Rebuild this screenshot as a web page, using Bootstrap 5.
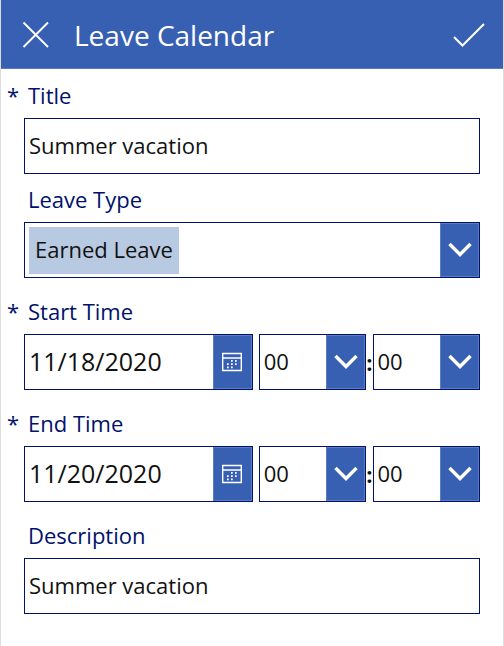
<!DOCTYPE html>
<html lang="en">
<head>
<meta charset="utf-8">
<meta name="viewport" content="width=device-width, initial-scale=1">
<title>Leave Calendar</title>
<link href="https://cdn.jsdelivr.net/npm/bootstrap@5.3.0/dist/css/bootstrap.min.css" rel="stylesheet">
<style>
  :root { --brand: #3860b2; --ink: #00126b; --text-weight: 400; }
  body { font-family: "Open Sans", "Noto Sans", sans-serif; font-size: 22px; color: #111; background: #fff; }
  .app-frame { border: solid #dcdcdc; border-width: 0 1px; min-height: 100vh; }
  .app-bar { background: var(--brand); height: 69px; padding: 2px 17px 0 19px; color: #fff; border-bottom: 1px solid #5b7cc2; }
  .app-bar h1 { font-size: 28px; font-weight: 400; line-height: 40px; }
  .icon-btn { border: 0; background: none; color: inherit; padding: 0; line-height: 1; }
  .icon-btn svg, .side-btn svg { display: block; }
  .leave-form { padding: 5px 23px 31px 23px; }
  .field-label { color: var(--ink); font-weight: var(--text-weight); line-height: 42px; padding: 0 0 2px 4px; position: relative; display: block; }
  .required::before { content: "*"; position: absolute; left: -17px; }
  .field-box { border: 1px solid var(--ink); height: 56px; background: #fff; min-width: 0; }
  .field-box input, .field-box select { border: 0; background: transparent; color: #111; font-weight: var(--text-weight); padding: 0 4px 1px; min-width: 0; width: 100%; flex: 1 1 0; appearance: none; border-radius: 0; }
  .field-box .date-input { font-size: 25px; padding-bottom: 0; }
  .field-box .chip-select { flex: 0 0 150px; background: #b8c9e2; height: 47px; margin-left: 4px; padding: 0 6px 1px; }
  .side-btn { flex: 0 0 39px; border: 1px solid #5b7cc2; background: var(--brand); color: #fff; padding: 0; display: flex; align-items: center; justify-content: center; }
  .date-part { flex: 230 1 0; margin-right: 6px; }
  .time-part { flex: 107 1 0; }
  .colon { flex: 0 0 6px; font-weight: 700; display: flex; justify-content: center; }
</style>
</head>
<body>
<svg class="d-none" aria-hidden="true">
  <symbol id="chevron" viewBox="0 0 24 16"><path d="M1.500 2 12 12.500 22.500 2" fill="none" stroke="currentColor" stroke-width="3.400"/></symbol>
  <symbol id="calendar" viewBox="0 0 20 20">
    <path d="M.7 1.500h18.600v17H.7zM1 6h18" fill="none" stroke="currentColor" stroke-width="1.400"/>
    <path d="M9 8h1.700v1.700H9zM13 8h1.700v1.700H13zM5 11.300h1.700V13H5zM9 11.300h1.700V13H9zM13 11.300h1.700V13H13zM5 14.500h1.700v1.700H5zM9 14.500h1.700v1.700H9z" fill="currentColor"/>
  </symbol>
</svg>
<div class="app-frame">
  <header class="app-bar d-flex align-items-center">
    <button class="icon-btn" type="button" aria-label="Cancel"><svg width="30" height="30" viewBox="0 0 30 30"><path d="M3.500 2.500 28 27M28 2.500 3.500 27" fill="none" stroke="currentColor" stroke-width="1.900"/></svg></button>
    <h1 class="mb-0 ms-4 flex-grow-1">Leave Calendar</h1>
    <button class="icon-btn" type="button" aria-label="Save"><svg width="34" height="30" viewBox="0 0 34 30"><path d="M2 17 10.500 25.500 32 4" fill="none" stroke="currentColor" stroke-width="2"/></svg></button>
  </header>
  <form class="leave-form d-flex flex-column">
    <div class="mb-1">
      <label class="field-label required" for="title">Title</label>
      <div class="field-box d-flex"><input id="title" type="text" value="Summer vacation"></div>
    </div>
    <div class="mb-2 pb-1">
      <label class="field-label" for="type">Leave Type</label>
      <div class="field-box d-flex align-items-center justify-content-between">
        <select class="chip-select" id="type"><option>Earned Leave</option></select>
        <button class="side-btn align-self-stretch" type="button" aria-label="Show leave types"><svg width="24" height="16"><use href="#chevron"/></svg></button>
      </div>
    </div>
    <div class="mb-2 pb-1">
      <label class="field-label required" for="start">Start Time</label>
      <div class="d-flex align-items-center">
        <div class="field-box date-part d-flex"><input class="date-input" id="start" type="text" value="11/18/2020"><button class="side-btn" type="button" aria-label="Pick start date"><svg width="20" height="20"><use href="#calendar"/></svg></button></div>
        <div class="field-box time-part d-flex"><select aria-label="Start hour"><option>00</option></select><button class="side-btn" type="button" aria-label="Show hours"><svg width="24" height="16"><use href="#chevron"/></svg></button></div>
        <span class="colon">:</span>
        <div class="field-box time-part d-flex"><select aria-label="Start minute"><option>00</option></select><button class="side-btn" type="button" aria-label="Show minutes"><svg width="24" height="16"><use href="#chevron"/></svg></button></div>
      </div>
    </div>
    <div class="mb-2 pb-1">
      <label class="field-label required" for="end">End Time</label>
      <div class="d-flex align-items-center">
        <div class="field-box date-part d-flex"><input class="date-input" id="end" type="text" value="11/20/2020"><button class="side-btn" type="button" aria-label="Pick end date"><svg width="20" height="20"><use href="#calendar"/></svg></button></div>
        <div class="field-box time-part d-flex"><select aria-label="End hour"><option>00</option></select><button class="side-btn" type="button" aria-label="Show hours"><svg width="24" height="16"><use href="#chevron"/></svg></button></div>
        <span class="colon">:</span>
        <div class="field-box time-part d-flex"><select aria-label="End minute"><option>00</option></select><button class="side-btn" type="button" aria-label="Show minutes"><svg width="24" height="16"><use href="#chevron"/></svg></button></div>
      </div>
    </div>
    <div>
      <label class="field-label" for="description">Description</label>
      <div class="field-box d-flex"><input id="description" type="text" value="Summer vacation"></div>
    </div>
  </form>
</div>
<script src="https://cdn.jsdelivr.net/npm/bootstrap@5.3.0/dist/js/bootstrap.bundle.min.js"></script>
</body>
</html>
